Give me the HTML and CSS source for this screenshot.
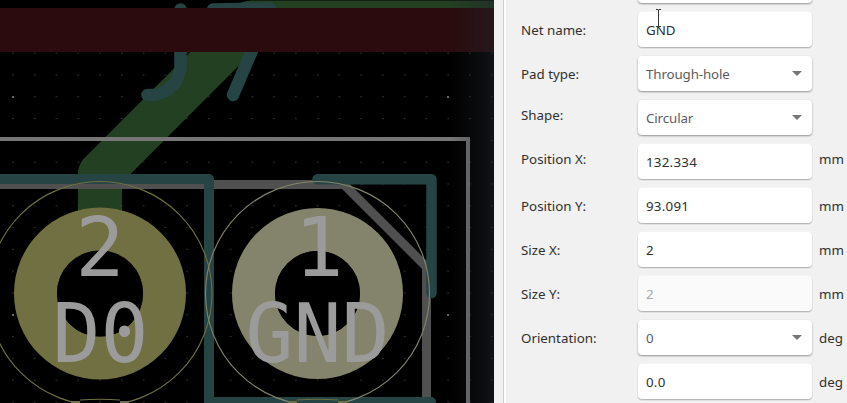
FILE: index.html
```html
<!DOCTYPE html>
<html lang="en">
<head>
<meta charset="utf-8">
<title>Pad Properties</title>
<link rel="stylesheet" href="styles.css">
</head>
<body>
<main class="window">
  <svg class="board" width="494" height="403" viewBox="0 0 494 403">
    <defs>
      <pattern id="grid" x="2.2" y="42.7" width="21.76" height="21.8" patternUnits="userSpaceOnUse">
        <rect class="dot" x="10" y="10" width="1.6" height="1"/>
      </pattern>
      <linearGradient id="edge" x1="0" x2="1" y1="0" y2="0">
        <stop offset="0" stop-color="#20242c" stop-opacity="0"/>
        <stop offset="1" stop-color="#20242c" stop-opacity=".5"/>
      </linearGradient>
    </defs>
    <rect width="494" height="403" fill="#000"/>
    <rect y="52" width="494" height="351" fill="url(#grid)"/>
    <g class="major">
      <path d="M12 97h2M447 97h2M12 315h2M447 315h2"/>
    </g>
    <path class="copper" d="M100 293V173.500L251 22.500H494"/>
    <path class="silk-dim" d="M0 184.500H344L426.500 267V403"/>
    <path class="courtyard" d="M0 139H468V403"/>
    <g class="silk">
      <path stroke-width="12.500" d="M180.500 9.500V69L176 82L166 91L155 95H147.500M213 9.500L270 8.500L233 95"/>
      <path stroke-width="10" d="M0 179H209V402H431"/>
      <path stroke-width="10.500" d="M317.500 179.300H431.500V293"/>
    </g>
    <rect y="8" width="494" height="44" fill="#2b0b0d"/>
    <circle class="pad signal" cx="100" cy="293.500" r="64.500"/>
    <circle class="pad ground" cx="317.500" cy="293.500" r="64"/>
    <circle class="hole" cx="100" cy="293.500" r="43"/>
    <circle class="hole" cx="317.500" cy="293.500" r="42.500"/>
    <circle class="clear signal" cx="100" cy="293.500" r="112"/>
    <circle class="clear ground" cx="317.500" cy="293.500" r="112"/>
    <path class="clear signal" d="M80 400Q100 398.500 120 400M297 400Q317 398.500 338 400"/>
    <path class="nub" d="M71 402h9M120 402h9M288 402h9M338 402h9"/>
    <g class="pad-text">
      <text x="100" y="276">2</text>
      <text x="100.500" y="362" textLength="96" lengthAdjust="spacingAndGlyphs">D0</text>
      <text x="319" y="276">1</text>
      <text x="317.500" y="362" textLength="144" lengthAdjust="spacingAndGlyphs">GND</text>
      <circle cx="124.500" cy="331" r="5.500"/>
    </g>
    <rect x="450" width="44" height="403" fill="url(#edge)"/>
  </svg>
  <div class="sash"></div>
  <form class="panel">
    <div class="row previous"><span></span><span class="field combo"></span></div>
    <div class="row"><label>Net name:</label><span class="field entry">GND<svg class="caret" width="7" height="18" viewBox="0 0 7 18"><path d="M1 .5H3L3.500 1L4 .5H6M3.500 1V17M1 17.500H3L3.500 17L4 17.500H6" fill="none" stroke="#333"/></svg></span></div>
    <div class="row"><label>Pad type:</label><span class="field combo">Through-hole<i class="arrow"></i></span></div>
    <div class="row raised"><label>Shape:</label><span class="field combo">Circular<i class="arrow"></i></span></div>
    <div class="row raised"><label>Position X:</label><span class="field entry number">132.334</span><span class="unit">mm</span></div>
    <div class="row"><label>Position Y:</label><span class="field entry number">93.091</span><span class="unit">mm</span></div>
    <div class="row"><label>Size X:</label><span class="field entry number">2</span><span class="unit">mm</span></div>
    <div class="row"><label>Size Y:</label><span class="field entry disabled">2</span><span class="unit">mm</span></div>
    <div class="row"><label>Orientation:</label><span class="field combo">0<i class="arrow"></i></span><span class="unit">deg</span></div>
    <div class="row"><span></span><span class="field entry number">0.0</span><span class="unit">deg</span></div>
  </form>
</main>
</body>
</html>
```
FILE: styles.css
```css
* { box-sizing: border-box; }
body { margin: 0; overflow: hidden; background: #f1f1f1; font: 13.33px/18px "Noto Sans", sans-serif; color: #303030; }
.window { display: flex; width: 847px; height: 403px; overflow: hidden; }
.board { flex: none; display: block; }
.dot { fill: #3c3c3c; }
.major { stroke: #666; stroke-width: 2; }
.copper { fill: none; stroke: #234022; stroke-width: 44; stroke-linejoin: round; }
.silk-dim { fill: none; stroke: #505050; stroke-width: 9; }
.courtyard { fill: none; stroke: #767676; stroke-width: 4; }
.silk { fill: none; stroke: #264444; stroke-linecap: round; stroke-linejoin: round; }
.signal { stroke: #707042; }
.ground { stroke: #84846c; }
.pad { fill: none; stroke-width: 43; }
.hole { fill: #000; }
.clear { fill: none; stroke-width: 1.1; }
.nub { stroke: #707042; stroke-width: 2; }
.pad-text { fill: #9b9b9b; font: 82px "DejaVu Sans Mono", monospace; text-anchor: middle; }
.sash { flex: none; width: 12px; border-right: 2px solid #fff; background: linear-gradient(90deg, #f1f1f1 9px, #cfcfcf 9px); }
.panel { flex: none; width: 341px; padding-left: 15px; margin-top: -36px; }
.row { display: grid; grid-template-columns: 117px 174px 1fr; align-items: center; height: 44px; }
.row .unit { padding-left: 7px; }
.raised label, .raised .unit { transform: translateY(-3px); }
.field { position: relative; display: flex; align-items: center; justify-content: space-between; height: 35px; margin-bottom: 1px; padding: 0 10px 0 8px; border-radius: 4px; background: #fff; box-shadow: 0 1px 2px rgba(0,0,0,.4); }
.entry { box-shadow: 0 1px 2px rgba(0,0,0,.36), 0 1px 0 2px #f9f9f9; }
.number { letter-spacing: .25px; }
.combo { color: #5c5c5c; letter-spacing: -.12px; }
.disabled { background: #fafafa; color: #aaa; }
.arrow { border: 5px solid transparent; border-top-color: #757575; border-bottom: 0; }
.caret { position: absolute; left: 17px; top: -3px; }
```
